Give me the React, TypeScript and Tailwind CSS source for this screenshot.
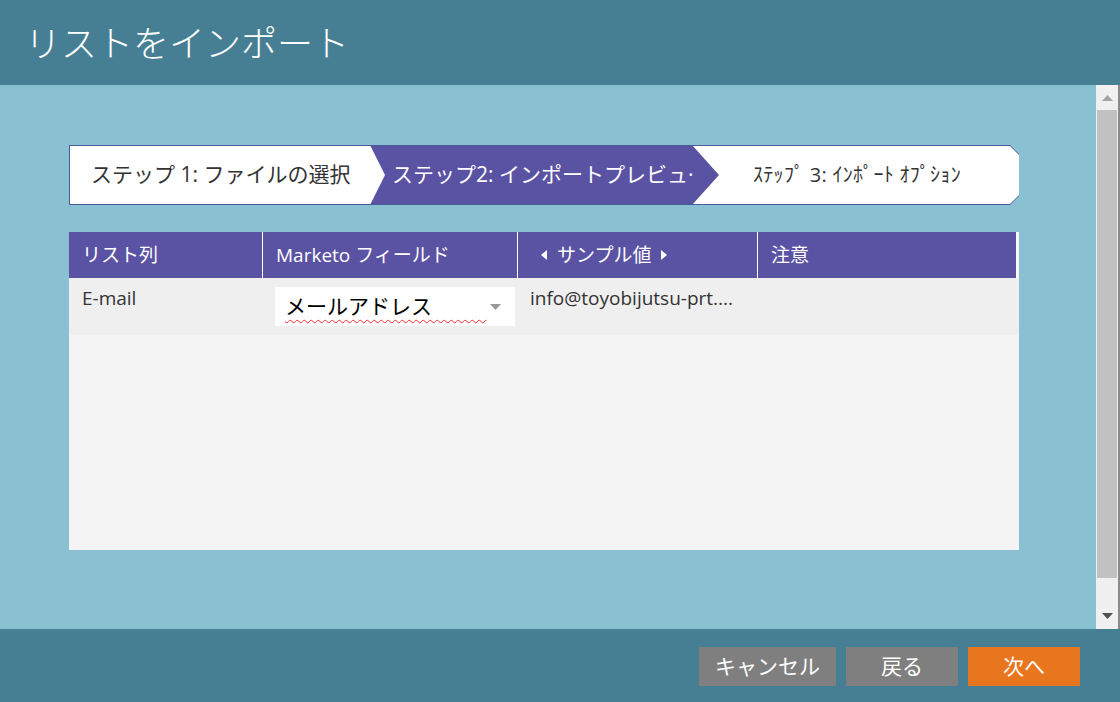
import React from 'react';

const jp = '[font-family:"Open_Sans","Noto_Sans_CJK_JP",sans-serif]';

const columns = [
  { label: 'リスト列', w: 'w-[194px]' },
  { label: 'Marketo フィールド', w: 'w-[255px]' },
  { label: 'sample', w: 'w-[240px]' },
  { label: '注意', w: 'flex-1' },
];

const Caret = ({ dir }: { dir: 'left' | 'right' }) => (
  <svg width="6" height="10" viewBox="0 0 6 10" className="inline-block">
    {dir === 'left' ? <path d="M6 0 L0 5 L6 10 Z" fill="white" /> : <path d="M0 0 L6 5 L0 10 Z" fill="white" />}
  </svg>
);

const StepsBar = () => (
  <div className="h-[60px] w-[950px] bg-[#4b5a9c] p-px pr-0 [clip-path:polygon(0_0,calc(100%-9px)_0,100%_9px,100%_calc(100%-9px),calc(100%-9px)_100%,0_100%)]">
    <div className="relative flex h-full bg-white [clip-path:polygon(0_0,calc(100%-9px)_0,100%_9px,100%_calc(100%-9px),calc(100%-9px)_100%,0_100%)]">
      <div className="flex w-[300px] items-center pl-[21px] text-[21px] text-[#333]">ステップ 1: ファイルの選択</div>
      <div className="z-10 -my-px -mr-[27px] flex w-[349px] items-center bg-[#5a52a3] pl-[22px] text-[21px] text-white [clip-path:polygon(0_0,calc(100%-27px)_0,100%_50%,calc(100%-27px)_100%,0_100%,15px_50%)]">
        <span className="whitespace-nowrap">ステップ2: インポートプレビュ·</span>
      </div>
      <div className="flex flex-1 items-center pl-[61px] text-[20px] tracking-[0.3px] text-[#333]">ｽﾃｯﾌﾟ 3: ｲﾝﾎﾟｰﾄ ｵﾌﾟｼｮﾝ</div>
    </div>
  </div>
);

const Table = () => (
  <div className="mt-[27px] flex h-[318px] w-[950px] flex-col bg-[#f4f4f4]">
    <div className="flex h-[46px] w-[948px] bg-[#5a52a3] text-[19px] text-white">
      {columns.map((c, i) => (
        <div key={i} className={`${c.w} flex items-center border-r border-white pl-[13px]`}>
          {c.label === 'sample' ? (
            <span className="flex items-center gap-[10px] pl-[10px]">
              <Caret dir="left" />
              サンプル値
              <Caret dir="right" />
            </span>
          ) : (
            c.label
          )}
        </div>
      ))}
    </div>
    <div className="flex h-[57px] bg-[#efefef] text-[19px] text-[#333]">
      <div className="w-[194px] pl-[13px] pt-[6px]">E-mail</div>
      <div className="w-[255px] pl-[12px] pt-[9px]">
        <div className="flex h-[39px] w-[240px] items-center justify-between bg-white pl-[10px] pr-[14px]">
          <span className="whitespace-pre text-[21px] text-black underline decoration-red-500 decoration-wavy decoration-1 underline-offset-[5px]">
            {'メールアドレス\u00a0\u00a0\u00a0\u00a0\u00a0\u00a0\u00a0\u00a0\u00a0\u00a0'}
          </span>
          <svg width="11" height="6" viewBox="0 0 11 6">
            <path d="M0 0 L11 0 L5.5 6 Z" fill="#999" />
          </svg>
        </div>
      </div>
      <div className="w-[240px] pl-[12px] pt-[6px]">info@toyobijutsu-prt....</div>
    </div>
  </div>
);

const Scrollbar = () => (
  <div className="flex w-[24px] flex-col border-r-2 border-[#8a8a8a] bg-[#f0f0f0]">
    <div className="flex h-[25px] items-center justify-center">
      <svg width="11" height="6" viewBox="0 0 11 6">
        <path d="M0 6 L11 6 L5.5 0 Z" fill="#a3a3a3" />
      </svg>
    </div>
    <div className="mx-px h-[468px] bg-[#c1c1c1]" />
    <div className="flex flex-1 items-end justify-center pb-[10px]">
      <svg width="11" height="6" viewBox="0 0 11 6">
        <path d="M0 0 L11 0 L5.5 6 Z" fill="#505050" />
      </svg>
    </div>
  </div>
);

export default function App() {
  return (
    <div className={`flex h-[702px] w-[1120px] flex-col overflow-hidden ${jp}`}>
      <header className="flex h-[85px] items-center bg-[#467f93] pb-[4px] pl-[25px] text-[36px] text-white [font-family:'Noto_Sans_CJK_JP',sans-serif] font-light">
        リストをインポート
      </header>
      <div className="flex flex-1">
        <main className="flex-1 bg-[#89c1d3] pl-[69px] pt-[60px]">
          <StepsBar />
          <Table />
        </main>
        <Scrollbar />
      </div>
      <footer className="flex h-[73px] items-start justify-end gap-[10px] bg-[#467f93] pr-[40px] pt-[18px] text-[21px] text-white">
        <button className="h-[39px] w-[137px] bg-[#7f7f7f]">キャンセル</button>
        <button className="h-[39px] w-[112px] bg-[#7f7f7f]">戻る</button>
        <button className="h-[39px] w-[112px] bg-[#e8761e]">次へ</button>
      </footer>
    </div>
  );
}
